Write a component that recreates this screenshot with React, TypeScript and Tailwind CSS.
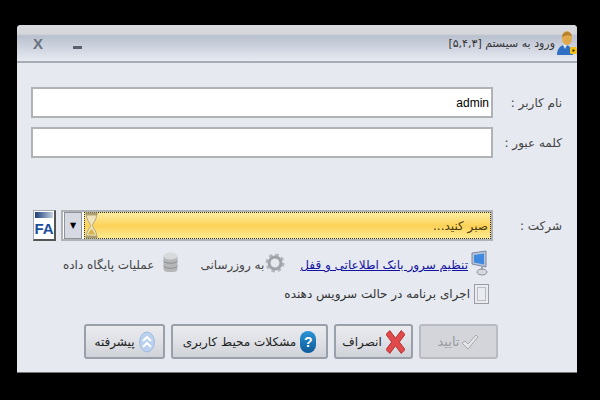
const font = { fontFamily: '"DejaVu Sans", "Liberation Sans", sans-serif' };

function UserLockIcon() {
  return (
    <svg width="20" height="26" viewBox="0 0 20 26">
      <ellipse cx="10" cy="8" rx="5" ry="7" fill="#e0a94c" />
      <path d="M5 7c0-6 9-7 10-1-3-1-6-1-10 1z" fill="#b9802c" />
      <path d="M0 25c0-7 4-10 8-10s7 3 8 10z" fill="#2f6fc4" />
      <path d="M6 15l2 4 2-4z" fill="#dfe9f6" />
      <rect x="13" y="17" width="7" height="7" rx="1" fill="#f2c21b" />
      <circle cx="16.5" cy="20.5" r="1.2" fill="#5a4300" />
    </svg>
  );
}

function FaIcon() {
  return (
    <div className="flex h-[31px] w-[23px] flex-col border border-[#a4a8b0] border-r-2 border-b-2 border-r-[#555] border-b-[#555] bg-white">
      <div className="mx-px mt-px h-[6px] bg-gradient-to-r from-[#1d3f7a] to-[#c9d3e2]" />
      <div className="flex flex-1 items-center justify-center text-[15px] font-bold leading-none text-[#1c4f9c]" style={{ fontFamily: '"Liberation Sans", sans-serif' }}>
        FA
      </div>
    </div>
  );
}

function Hourglass() {
  return (
    <svg width="13" height="27" viewBox="0 0 13 27">
      <rect x="0.5" y="0.5" width="12" height="2.5" fill="#a89a70" />
      <rect x="0.5" y="24" width="12" height="2.5" fill="#a89a70" />
      <path d="M1.5 3h10c0 6-3.5 7-4 10.5.5 3.500 4 4.500 4 10.500h-10c0-6 3.500-7 4-10.500-.5-3.500-4-4.500-4-10.500z" fill="#efe4bd" stroke="#b3a67c" />
      <path d="M3 22.500c1-3 2.500-4.500 3.500-5.500 1 1 2.500 2.500 3.500 5.500z" fill="#d8b24c" />
    </svg>
  );
}

function MonitorIcon() {
  return (
    <svg width="17" height="26" viewBox="0 0 17 26">
      <path d="M1 3l14-2v16L1 14z" fill="#b9c3d6" stroke="#7d8aa5" />
      <path d="M3 5l10-1.500v11L3 12.500z" fill="#3f8ae0" />
      <ellipse cx="11" cy="22" rx="5" ry="3" fill="#d4d8de" stroke="#8d939c" />
      <rect x="10" y="17" width="2" height="3" fill="#9aa1ab" />
    </svg>
  );
}

function GearIcon() {
  return (
    <svg width="20" height="24" viewBox="0 0 20 24">
      <circle cx="10" cy="12" r="7" fill="none" stroke="#b4b8be" strokeWidth="5" strokeDasharray="3 2.500" />
      <circle cx="10" cy="12" r="6" fill="none" stroke="#a0a4aa" strokeWidth="3" />
      <circle cx="10" cy="12" r="3.500" fill="#e6e9ee" />
    </svg>
  );
}

function DbIcon() {
  return (
    <svg width="15" height="24" viewBox="0 0 15 24">
      <rect x="0.500" y="3" width="14" height="18" rx="4" fill="#b4b6b8" />
      <ellipse cx="7.500" cy="5" rx="7" ry="3.500" fill="#d8d9da" />
      <path d="M.5 10c2 3 12 3 14 0M.5 15c2 3 12 3 14 0" fill="none" stroke="#8c8e90" />
    </svg>
  );
}

function XIcon() {
  return (
    <svg width="19" height="26" viewBox="0 0 20 26">
      <path d="M4 1l6 8 6-8 4 4-6 8 6 8-4 4-6-8-6 8-4-4 6-8-6-8z" fill="#e04a4a" stroke="#b32d2d" />
    </svg>
  );
}

function HelpIcon() {
  return (
    <div className="flex h-[22px] w-[16px] items-center justify-center rounded-full bg-gradient-to-b from-[#2d94d8] to-[#0c5b98] text-[14px] font-bold leading-none text-white" style={{ fontFamily: '"Liberation Sans", sans-serif' }}>
      ?
    </div>
  );
}

function AdvancedIcon() {
  return (
    <svg width="16" height="22" viewBox="0 0 16 22">
      <ellipse cx="8" cy="11" rx="7.500" ry="10" fill="#b9d0ee" stroke="#a3bcdd" />
      <path d="M4 10l4-4 4 4M4 16l4-4 4 4" fill="none" stroke="#fff" strokeWidth="2" />
    </svg>
  );
}

function CheckIcon() {
  return (
    <svg width="18" height="16" viewBox="0 0 18 16">
      <path d="M1 9l3-2 3 3 8-9 2 2-10 12z" fill="#e4e5e7" stroke="#a6a8ac" />
    </svg>
  );
}

const btnCls =
  "flex h-[35px] items-center justify-center gap-[4px] rounded-[3px] border-2 border-[#9aa0a9] bg-gradient-to-b from-[#e9ebef] via-[#dfe1e6] to-[#cfd2d8] text-[12px] text-[#222]";
const inputCls = "h-[31px] w-[462px] border-2 border-[#b0b2b5] bg-white";
const labelCls = "text-[12px] leading-none text-[#444]";

export default function App() {
  return (
    <div className="h-[400px] w-[600px] overflow-hidden bg-black pt-[25px] pl-[17px]" style={font}>
      <div className="flex h-[348px] w-[560px] flex-col overflow-hidden rounded-t-[4px] border-b border-[#777] bg-[#e6e9f0]">
        {/* title bar */}
        <div className="flex h-[38px] items-center justify-between border-b-2 border-[#a9acb3] bg-[linear-gradient(#d9dadd_0%,#d4d6da_25%,#b9c0ce_30%,#e6eaf2_100%)] pl-[16px]">
          <div className="flex items-center gap-[30px] text-[#6a7280]">
            <span className="text-[15px] font-bold leading-none" style={{ fontFamily: '"Liberation Sans", sans-serif' }}>X</span>
            <span className="mt-[8px] h-[3px] w-[9px] bg-[#5a6270]" />
          </div>
          <div className="flex items-center gap-[2px]">
            <span className="mt-[2px] text-[11px] text-[#333]" dir="rtl">ورود به سیستم [۵,۴,۳]</span>
            <UserLockIcon />
          </div>
        </div>

        {/* fields */}
        <div className="mt-[24px] flex items-center justify-between pl-[14px] pr-[15px]">
          <div className={`${inputCls} flex items-center justify-end pr-[2px] text-[12px] text-black`} style={{ fontFamily: '"Liberation Sans", sans-serif' }}>admin</div>
          <span className={labelCls} dir="rtl">نام کاربر :</span>
        </div>
        <div className="mt-[9px] flex items-center justify-between pl-[14px] pr-[15px]">
          <div className={inputCls} />
          <span className={labelCls} dir="rtl">کلمه عبور :</span>
        </div>

        {/* company */}
        <div className="mt-[52px] flex items-center justify-between pl-[16px] pr-[15px]">
          <div className="flex items-center gap-[5px]">
            <FaIcon />
            <div className="flex h-[31px] w-[432px] items-stretch border-2 border-[#b0b2b5] bg-white">
              <div className="ml-px flex w-[18px] items-center justify-center border border-[#8f939a] bg-[#d6d9e2] text-[8px] leading-none text-black">▼</div>
              <div className="ml-[2px] flex flex-1 items-center justify-between border border-dotted border-[#333] bg-gradient-to-b from-[#fbeea0] via-[#fdd256] to-[#fbe98f] pr-[2px]">
                <Hourglass />
                <span className="text-[12px] text-[#4a3a10]" dir="rtl">صبر کنید...</span>
              </div>
            </div>
          </div>
          <span className={labelCls} dir="rtl">شرکت :</span>
        </div>

        {/* links */}
        <div className="mt-[9px] flex h-[26px] items-center justify-end pr-[89px]">
          <div className="flex items-center gap-[9px]">
            <span className="mt-[4px] text-[12px] text-[#444]" dir="rtl">عملیات پایگاه داده</span>
            <DbIcon />
          </div>
          <div className="ml-[22px] flex items-center gap-[1px]">
            <span className="mt-[4px] text-[12px] text-[#444]" dir="rtl">به روزرسانی</span>
            <GearIcon />
          </div>
          <div className="ml-[15px] flex items-center gap-[3px]">
            <span className="mt-[4px] text-[12px] text-[#1212a0] underline" dir="rtl">تنظیم سرور بانک اطلاعاتی و قفل</span>
            <MonitorIcon />
          </div>
        </div>

        {/* service mode */}
        <div className="mt-[8px] flex h-[20px] items-center justify-end gap-[4px] pr-[88px]">
          <span className="text-[12px] text-[#333]" dir="rtl">اجرای برنامه در حالت سرویس دهنده</span>
          <div className="flex h-[20px] w-[15px] items-center justify-center border border-[#9a9da3] bg-[#e9ebf0]">
            <div className="h-[14px] w-[9px] border border-[#b9bcc2]" />
          </div>
        </div>

        {/* buttons */}
        <div className="mt-[20px] flex gap-[6px] pl-[67px]">
          <div className={`${btnCls} w-[81px]`}>
            <span dir="rtl">پیشرفته</span>
            <AdvancedIcon />
          </div>
          <div className={`${btnCls} w-[157px]`}>
            <span dir="rtl">مشکلات محیط کاربری</span>
            <HelpIcon />
          </div>
          <div className={`${btnCls} w-[79px]`}>
            <span dir="rtl">انصراف</span>
            <XIcon />
          </div>
          <div className="flex h-[35px] w-[79px] items-center justify-center gap-[2px] rounded-[3px] border-2 border-[#b9bbc0] bg-[#d3d5da] text-[13px] text-[#9a9ca1]">
            <span dir="rtl">تایید</span>
            <CheckIcon />
          </div>
        </div>
      </div>
    </div>
  );
}
